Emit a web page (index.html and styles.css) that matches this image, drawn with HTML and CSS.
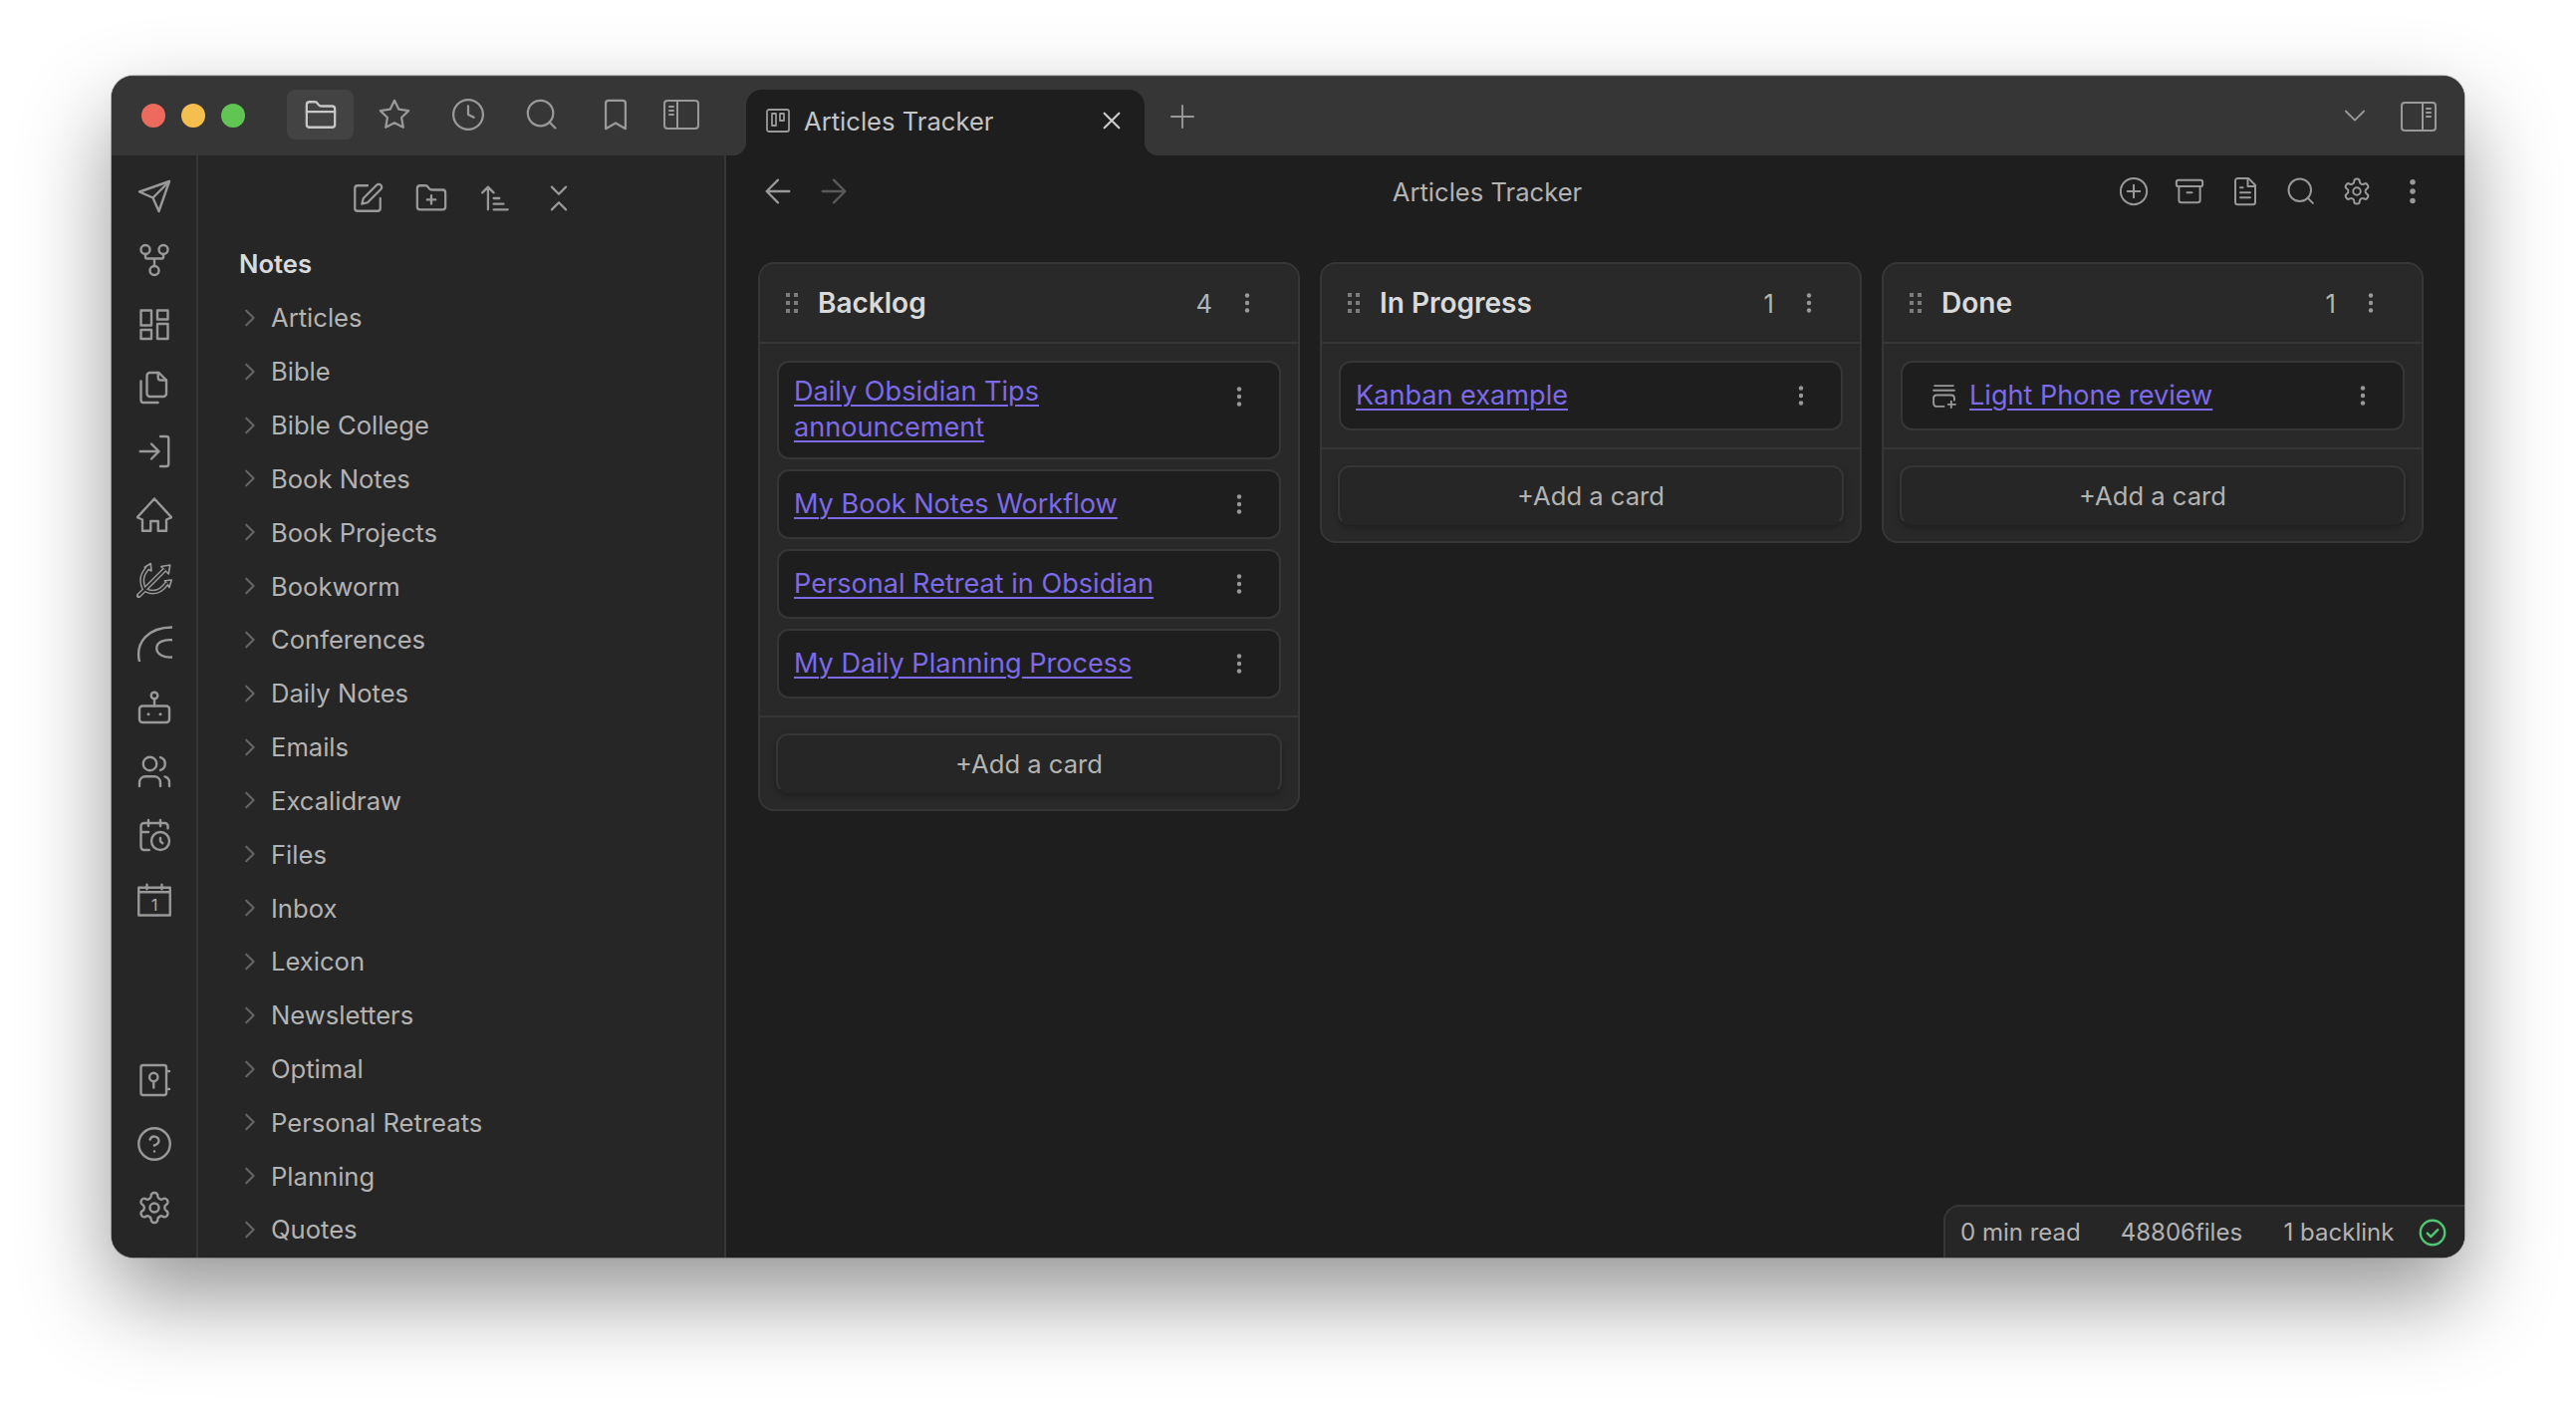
FILE: index.html
```html
<!DOCTYPE html>
<html>
<head>
    <title>Articles Tracker</title>
    <meta name="viewport" content="width=device-width, initial-scale=1">
    <link rel="stylesheet" href="styles.css">
</head>
<body>
<svg class="defs" width="0" height="0">
    <symbol id="i-chevron" viewBox="0 0 24 24"><path d="m9 4 8 8-8 8"/></symbol>
    <symbol id="i-kebab" viewBox="0 0 24 24"><circle class="solid" cx="12" cy="4.5" r="2.2"/><circle class="solid" cx="12" cy="12" r="2.2"/><circle class="solid" cx="12" cy="19.5" r="2.2"/></symbol>
    <symbol id="i-grip" viewBox="0 0 24 24"><rect class="solid" x="6" y="2" width="4" height="4"/><rect class="solid" x="14" y="2" width="4" height="4"/><rect class="solid" x="6" y="10" width="4" height="4"/><rect class="solid" x="14" y="10" width="4" height="4"/><rect class="solid" x="6" y="18" width="4" height="4"/><rect class="solid" x="14" y="18" width="4" height="4"/></symbol>
    <symbol id="i-search" viewBox="0 0 24 24"><circle cx="11" cy="11" r="9"/><path d="m21.5 21.5-4.2-4.2"/></symbol>
    <symbol id="i-gear" viewBox="0 0 24 24"><path d="M12.22 2h-.44a2 2 0 0 0-2 2v.18a2 2 0 0 1-1 1.73l-.43.25a2 2 0 0 1-2 0l-.15-.08a2 2 0 0 0-2.73.73l-.22.38a2 2 0 0 0 .73 2.73l.15.1a2 2 0 0 1 1 1.72v.51a2 2 0 0 1-1 1.74l-.15.09a2 2 0 0 0-.73 2.73l.22.38a2 2 0 0 0 2.73.73l.15-.08a2 2 0 0 1 2 0l.43.25a2 2 0 0 1 1 1.73V20a2 2 0 0 0 2 2h.44a2 2 0 0 0 2-2v-.18a2 2 0 0 1 1-1.73l.43-.25a2 2 0 0 1 2 0l.15.08a2 2 0 0 0 2.73-.73l.22-.39a2 2 0 0 0-.73-2.73l-.15-.08a2 2 0 0 1-1-1.74v-.5a2 2 0 0 1 1-1.74l.15-.09a2 2 0 0 0 .73-2.73l-.22-.38a2 2 0 0 0-2.73-.73l-.15.08a2 2 0 0 1-2 0l-.43-.25a2 2 0 0 1-1-1.73V4a2 2 0 0 0-2-2z"/><circle cx="12" cy="12" r="3"/></symbol>
</svg>

<div class="window">
    <div class="titlebar">
        <div class="lights">
            <span class="light red"></span>
            <span class="light yellow"></span>
            <span class="light green"></span>
        </div>
        <div class="title-tools">
            <span class="tool active"><svg class="icon lg" viewBox="0 0 24 24"><path d="M20 21a2 2 0 0 0 2-2V8a2 2 0 0 0-2-2h-7.9a2 2 0 0 1-1.69-.9L9.6 3.9A2 2 0 0 0 7.93 3H4a2 2 0 0 0-2 2v14a2 2 0 0 0 2 2Z"/><path d="M2 10h20"/></svg></span>
            <span class="tool"><svg class="icon lg" viewBox="0 0 24 24"><path d="M12 2l3.09 6.26L22 9.27l-5 4.87 1.18 6.88L12 17.77l-6.18 3.25L7 14.14 2 9.27l6.91-1.01z"/></svg></span>
            <span class="tool"><svg class="icon lg" viewBox="0 0 24 24"><circle cx="12" cy="12" r="10.5"/><path d="M12 6v6l4 2"/></svg></span>
            <span class="tool"><svg class="icon lg"><use href="#i-search"/></svg></span>
            <span class="tool"><svg class="icon lg" viewBox="0 0 24 24"><path d="m19 22-7-4-7 4V4a2 2 0 0 1 2-2h10a2 2 0 0 1 2 2z"/></svg></span>
            <span class="tool narrow"><svg class="icon wide" viewBox="0 0 36 30"><rect x="1" y="1" width="34" height="28" rx="3"/><path d="M14 1v28M6 7h4M6 11h4M6 15h4"/></svg></span>
        </div>
        <div class="tab">
            <svg class="icon tab-icon" viewBox="0 0 24 24"><rect x="1" y="1" width="22" height="22" rx="2"/><rect x="6" y="5" width="4" height="12"/><rect x="14" y="5" width="4" height="7"/></svg>
            <span class="tab-title">Articles Tracker</span>
            <svg class="icon tab-close" viewBox="0 0 24 24"><path d="M4 4l16 16M20 4 4 20"/></svg>
        </div>
        <svg class="icon new-tab" viewBox="0 0 24 24"><path d="M12 1v22M1 12h22"/></svg>
        <div class="title-right">
            <svg class="icon chev-down" viewBox="0 0 24 24"><path d="m2 6 10 10L22 6"/></svg>
            <svg class="icon wide" viewBox="0 0 36 30"><rect x="1" y="1" width="34" height="28" rx="3"/><path d="M22 1v28M26 7h4M26 11h4M26 15h4"/></svg>
        </div>
    </div>

    <div class="body">
        <div class="ribbon">
            <div class="ribbon-group">
                <svg class="icon rb" viewBox="0 0 24 24"><path d="m22 2-7 20-4-9-9-4Z"/><path d="M22 2 11 13"/></svg>
                <svg class="icon rb" viewBox="0 0 24 24"><circle cx="12" cy="19" r="3"/><circle cx="6" cy="5" r="3"/><circle cx="18" cy="5" r="3"/><path d="M18 8v2c0 .6-.4 1-1 1H7c-.6 0-1-.4-1-1V8M12 11v5"/></svg>
                <svg class="icon rb" viewBox="0 0 24 24"><rect x="3" y="3" width="7" height="10"/><rect x="14" y="3" width="7" height="6"/><rect x="14" y="12" width="7" height="10"/><rect x="3" y="16" width="7" height="6"/></svg>
                <svg class="icon rb" viewBox="0 0 24 24"><path d="M20 7h-4a1.5 1.5 0 0 1-1.5-1.5V2"/><path d="M9 18a2 2 0 0 1-2-2V4a2 2 0 0 1 2-2h6l5 5v9a2 2 0 0 1-2 2Z"/><path d="M3 7.6v12.8A1.6 1.6 0 0 0 4.6 22h9.8"/></svg>
                <svg class="icon rb" viewBox="0 0 24 24"><path d="M16 2h4a1.5 1.5 0 0 1 1.5 1.5v17A1.5 1.5 0 0 1 20 22h-4"/><path d="m10 17 5-5-5-5M15 12H2.5"/></svg>
                <svg class="icon rb" viewBox="0 0 24 24"><path d="M12 1 .5 13.5 4 15v7.5h5.5V16h5v6.5H20V15l3.5-1.5z"/></svg>
                <svg class="icon rb trident" viewBox="0 0 24 24">
                    <path class="tri-out" d="M1.5 22.5 19 5M5.5 18.5C2.5 13 3.5 8 8 3.500M5.500 18.500C11 21.500 16 20.500 20.500 14"/>
                    <path class="tri-head" d="M5.500 3.500 9.500 1l.5 5zM16.500 3l6-1-1 6zM19 12.500l4.500-.5-1.500 5z"/>
                    <path class="tri-in" d="M1.500 22.500 19 5M5.500 18.500C2.500 13 3.500 8 8 3.500M5.500 18.500C11 21.500 16 20.500 20.500 14"/>
                </svg>
                <svg class="icon rb" viewBox="0 0 24 24"><path d="M2 24C-1 11 8 1 24 1"/><path d="M24 9.500C18 9 13.500 11 13.500 15S18 21.500 24 21"/></svg>
                <svg class="icon rb" viewBox="0 0 24 24"><rect x="2" y="11" width="20" height="11" rx="2"/><circle cx="12" cy="4" r="2.2"/><path d="M12 6.200V11"/><circle class="solid" cx="8" cy="16.500" r="1"/><circle class="solid" cx="16" cy="16.500" r="1"/></svg>
                <svg class="icon rb" viewBox="0 0 24 24"><path d="M16 22v-2.500a4 4 0 0 0-4-4H6a4 4 0 0 0-4 4V22"/><circle cx="9" cy="7" r="4.500"/><path d="M22 22v-2.500a4 4 0 0 0-3-3.870M16 2.700a4.500 4.500 0 0 1 0 8.600"/></svg>
                <svg class="icon rb" viewBox="0 0 24 24"><path d="M21 7.500V6a2 2 0 0 0-2-2H5a2 2 0 0 0-2 2v14a2 2 0 0 0 2 2h3.500M16 2v4M8 2v4M3 10h5M17.500 17.500 16 16.250V14"/><circle cx="16" cy="16" r="6"/></svg>
                <svg class="icon rb" viewBox="0 0 24 24"><path d="M1.500 4.500h21V23h-21zM1.500 7.500h21M7 2.500v3M17 2.500v3"/><text class="cal-num" x="12" y="20">1</text></svg>
            </div>
            <div class="ribbon-group">
                <svg class="icon rb" viewBox="0 0 24 24"><rect x="3" y="2" width="17" height="20" rx="1.500"/><circle cx="11.500" cy="10" r="2.800"/><path d="M11.500 12.800V17M20 6h2M20 18h2"/></svg>
                <svg class="icon rb" viewBox="0 0 24 24"><circle cx="12" cy="12" r="10.5"/><path d="M9.090 9a3 3 0 0 1 5.830 1c0 2-3 3-3 3M12 17h.01"/></svg>
                <svg class="icon rb"><use href="#i-gear"/></svg>
            </div>
        </div>

        <div class="sidebar">
            <div class="side-tools">
                <svg class="icon md" viewBox="0 0 24 24"><path d="M12 3H5a2 2 0 0 0-2 2v14a2 2 0 0 0 2 2h14a2 2 0 0 0 2-2v-7"/><path d="M18.375 2.625a2.121 2.121 0 1 1 3 3L12 15l-4 1 1-4Z"/></svg>
                <svg class="icon md" viewBox="0 0 24 24"><path d="M4 20h16a2 2 0 0 0 2-2V8a2 2 0 0 0-2-2h-7.930a2 2 0 0 1-1.660-.9l-.82-1.200A2 2 0 0 0 7.930 3H4a2 2 0 0 0-2 2v13c0 1.100.9 2 2 2Z"/><path d="M12 10v6M9 13h6"/></svg>
                <svg class="icon md" viewBox="0 0 24 24"><path d="m3 8 4-4 4 4M7 4v16M11 12h4M11 16h7M11 20h10"/></svg>
                <svg class="icon md" viewBox="0 0 24 24"><path d="m7 20 5-5 5 5M7 4l5 5 5-5"/></svg>
            </div>
            <div class="vault-name">Notes</div>
            <div class="tree">
                <div class="tree-row"><svg class="icon chev"><use href="#i-chevron"/></svg>Articles</div>
                <div class="tree-row"><svg class="icon chev"><use href="#i-chevron"/></svg>Bible</div>
                <div class="tree-row"><svg class="icon chev"><use href="#i-chevron"/></svg>Bible College</div>
                <div class="tree-row"><svg class="icon chev"><use href="#i-chevron"/></svg>Book Notes</div>
                <div class="tree-row"><svg class="icon chev"><use href="#i-chevron"/></svg>Book Projects</div>
                <div class="tree-row"><svg class="icon chev"><use href="#i-chevron"/></svg>Bookworm</div>
                <div class="tree-row"><svg class="icon chev"><use href="#i-chevron"/></svg>Conferences</div>
                <div class="tree-row"><svg class="icon chev"><use href="#i-chevron"/></svg>Daily Notes</div>
                <div class="tree-row"><svg class="icon chev"><use href="#i-chevron"/></svg>Emails</div>
                <div class="tree-row"><svg class="icon chev"><use href="#i-chevron"/></svg>Excalidraw</div>
                <div class="tree-row"><svg class="icon chev"><use href="#i-chevron"/></svg>Files</div>
                <div class="tree-row"><svg class="icon chev"><use href="#i-chevron"/></svg>Inbox</div>
                <div class="tree-row"><svg class="icon chev"><use href="#i-chevron"/></svg>Lexicon</div>
                <div class="tree-row"><svg class="icon chev"><use href="#i-chevron"/></svg>Newsletters</div>
                <div class="tree-row"><svg class="icon chev"><use href="#i-chevron"/></svg>Optimal</div>
                <div class="tree-row"><svg class="icon chev"><use href="#i-chevron"/></svg>Personal Retreats</div>
                <div class="tree-row"><svg class="icon chev"><use href="#i-chevron"/></svg>Planning</div>
                <div class="tree-row"><svg class="icon chev"><use href="#i-chevron"/></svg>Quotes</div>
            </div>
        </div>

        <div class="main">
            <div class="nav">
                <div class="nav-arrows">
                    <svg class="icon md" viewBox="0 0 24 24"><path d="m12 20-8-8 8-8M20 12H4"/></svg>
                    <svg class="icon md dim" viewBox="0 0 24 24"><path d="m12 4 8 8-8 8M4 12h16"/></svg>
                </div>
                <div class="nav-title">Articles Tracker</div>
                <div class="nav-actions">
                    <svg class="icon nv" viewBox="0 0 24 24"><circle cx="12" cy="12" r="10.5"/><path d="M12 7v10M7 12h10"/></svg>
                    <svg class="icon nv" viewBox="0 0 24 24"><rect x="1.500" y="3" width="21" height="5" rx="1.500"/><path d="M3.500 8v11a2 2 0 0 0 2 2h13a2 2 0 0 0 2-2V8M10 13h4"/></svg>
                    <svg class="icon nv" viewBox="0 0 24 24"><path d="M14.500 1.500H6a2 2 0 0 0-2 2v17a2 2 0 0 0 2 2h12a2 2 0 0 0 2-2V7z"/><path d="M14 2v6h6M16 13H8M16 17H8M10 9H8"/></svg>
                    <svg class="icon nv"><use href="#i-search"/></svg>
                    <svg class="icon nv"><use href="#i-gear"/></svg>
                    <svg class="icon nv"><use href="#i-kebab"/></svg>
                </div>
            </div>

            <div class="board">
                <div class="column">
                    <div class="col-head">
                        <svg class="icon grip"><use href="#i-grip"/></svg>
                        <span class="col-name">Backlog</span>
                        <span class="col-count">4</span>
                        <svg class="icon kebab"><use href="#i-kebab"/></svg>
                    </div>
                    <div class="cards">
                        <div class="card"><a class="card-link">Daily Obsidian Tips announcement</a><svg class="icon kebab top"><use href="#i-kebab"/></svg></div>
                        <div class="card"><a class="card-link">My Book Notes Workflow</a><svg class="icon kebab"><use href="#i-kebab"/></svg></div>
                        <div class="card"><a class="card-link">Personal Retreat in Obsidian</a><svg class="icon kebab"><use href="#i-kebab"/></svg></div>
                        <div class="card"><a class="card-link">My Daily Planning Process</a><svg class="icon kebab"><use href="#i-kebab"/></svg></div>
                    </div>
                    <div class="col-foot"><div class="add-card">+Add a card</div></div>
                </div>

                <div class="column">
                    <div class="col-head">
                        <svg class="icon grip"><use href="#i-grip"/></svg>
                        <span class="col-name">In Progress</span>
                        <span class="col-count">1</span>
                        <svg class="icon kebab"><use href="#i-kebab"/></svg>
                    </div>
                    <div class="cards">
                        <div class="card"><a class="card-link">Kanban example</a><svg class="icon kebab"><use href="#i-kebab"/></svg></div>
                    </div>
                    <div class="col-foot"><div class="add-card">+Add a card</div></div>
                </div>

                <div class="column">
                    <div class="col-head">
                        <svg class="icon grip"><use href="#i-grip"/></svg>
                        <span class="col-name">Done</span>
                        <span class="col-count">1</span>
                        <svg class="icon kebab"><use href="#i-kebab"/></svg>
                    </div>
                    <div class="cards">
                        <div class="card">
                            <svg class="icon card-icon" viewBox="0 0 24 24"><path d="M3 2h18M2 6.500h20M12 22H5a3 3 0 0 1-3-3v-5a3 3 0 0 1 3-3h14a3 3 0 0 1 3 3v2M19 17v6M16 20h7"/></svg>
                            <a class="card-link">Light Phone review</a>
                            <svg class="icon kebab"><use href="#i-kebab"/></svg>
                        </div>
                    </div>
                    <div class="col-foot"><div class="add-card">+Add a card</div></div>
                </div>
            </div>

            <div class="status">
                <span>0 min read</span>
                <span>48806files</span>
                <span class="backlinks">1 backlink</span>
                <svg class="icon sync" viewBox="0 0 24 24"><circle cx="12" cy="12" r="10.5"/><path d="m7.500 12.500 3 3 6-6"/></svg>
            </div>
        </div>
    </div>
</div>
</body>
</html>
```

FILE: styles.css
```css
* {
    box-sizing: border-box;
}

html, body {
    margin: 0;
    height: 100%;
}

body {
    background-color: #ffffff;
    padding: 76px 0 0 112px;
    font-family: Inter, "Liberation Sans", sans-serif;
    font-size: 25.6px;
    color: #b3b3b3;
    overflow: hidden;
}

.defs {
    display: block;
}

.icon {
    display: block;
    flex: none;
    fill: none;
    stroke: #999999;
    stroke-width: 1.6;
    stroke-linecap: round;
    stroke-linejoin: round;
}

.icon .solid,
symbol .solid {
    fill: #999999;
    stroke: none;
}

.window {
    width: 2362px;
    height: 1186px;
    display: flex;
    flex-direction: column;
    border-radius: 22px;
    overflow: hidden;
    background-color: #1e1e1e;
    box-shadow: 0 0 0 1px rgba(0, 0, 0, .25), 0 40px 90px rgba(0, 0, 0, .42);
}

/* title bar */
.titlebar {
    flex: none;
    height: 80px;
    display: flex;
    align-items: flex-start;
    background-color: #363636;
    padding-left: 30px;
    border-top: 1px solid #4a4a4a;
}

.lights {
    display: flex;
    gap: 16px;
    margin-top: 27px;
    width: 146px;
}

.light {
    width: 24px;
    height: 24px;
    border-radius: 50%;
}

.red { background-color: #ec6a5e; }
.yellow { background-color: #f4bf4f; }
.green { background-color: #61c554; }

.title-tools {
    display: flex;
    gap: 7px;
    margin-top: 13px;
    width: 461px;
}

.tool {
    width: 67px;
    height: 50px;
    display: flex;
    align-items: center;
    justify-content: center;
    border-radius: 8px;
}

.tool.active {
    background-color: #434343;
}

.tool.active .icon {
    stroke: #c8c8c8;
}

.tool.narrow {
    margin-left: -8px;
}

.icon.lg {
    width: 34px;
    height: 34px;
}

.icon.wide {
    width: 36px;
    height: 30px;
    stroke-width: 2;
}

.tab {
    position: relative;
    width: 400px;
    height: 66px;
    margin-top: 13px;
    display: flex;
    align-items: center;
    padding: 0 20px 4px 20px;
    background-color: #1e1e1e;
    border-radius: 16px 16px 0 0;
}

.tab::before,
.tab::after {
    content: "";
    position: absolute;
    bottom: 0;
    width: 14px;
    height: 14px;
}

.tab::before {
    left: -14px;
    background: radial-gradient(circle at 0 0, #363636 14px, #1e1e1e 14.5px);
}

.tab::after {
    right: -14px;
    background: radial-gradient(circle at 100% 0, #363636 14px, #1e1e1e 14.5px);
}

.tab-icon {
    width: 24px;
    height: 24px;
    stroke-width: 1.8;
}

.tab-title {
    margin-left: 14px;
    color: #c4c4c4;
    flex: 1;
}

.tab-close {
    width: 22px;
    height: 22px;
    stroke: #cccccc;
    stroke-width: 2.4;
    margin-right: 2px;
}

.new-tab {
    width: 24px;
    height: 24px;
    margin: 28px 0 0 26px;
    stroke-width: 1.9;
}

.title-right {
    margin-left: auto;
    display: flex;
    align-items: center;
    gap: 35px;
    padding: 25px 28px 0 0;
}

.chev-down {
    width: 22px;
    height: 22px;
    stroke-width: 2;
}

/* ribbon */
.body {
    flex: 1;
    display: flex;
    min-height: 0;
}

.ribbon {
    flex: none;
    width: 87px;
    background-color: #262626;
    border-right: 2px solid #363636;
    display: flex;
    flex-direction: column;
    justify-content: space-between;
    align-items: center;
    padding: 23px 0 32px;
}

.ribbon-group {
    display: flex;
    flex-direction: column;
    gap: 28.1px;
}

.icon.rb {
    width: 36px;
    height: 36px;
}

.trident .tri-out {
    stroke-width: 3.2;
}

.trident .tri-head {
    fill: #262626;
    stroke-width: 1.1;
}

.trident .tri-in {
    stroke: #262626;
    stroke-width: 1.2;
    stroke-linecap: butt;
}

.cal-num {
    font-family: Inter, "Liberation Sans", sans-serif;
    font-size: 11px;
    text-anchor: middle;
    fill: #aaaaaa;
    stroke: none;
}

/* file tree */
.sidebar {
    flex: none;
    width: 530px;
    background-color: #262626;
    border-right: 2px solid #363636;
    overflow: hidden;
}

.side-tools {
    display: flex;
    justify-content: center;
    gap: 30px;
    padding: 26px 0 0 3px;
}

.icon.md {
    width: 34px;
    height: 34px;
}

.vault-name {
    color: #dadada;
    font-weight: 600;
    padding: 31px 0 0 41px;
    line-height: 36px;
}

.tree {
    margin-top: 9px;
}

.tree-row {
    height: 53.84px;
    display: flex;
    align-items: center;
    padding-left: 40px;
    white-space: nowrap;
}

.icon.chev {
    width: 22px;
    height: 22px;
    margin-right: 11px;
    stroke: #666666;
    stroke-width: 2.2;
}

/* main area */
.main {
    position: relative;
    flex: 1;
    min-width: 0;
    background-color: #1e1e1e;
}

.nav {
    height: 72px;
    display: flex;
    align-items: center;
    padding: 0 37.5px 0 35px;
    position: relative;
}

.nav-arrows {
    display: flex;
    gap: 22px;
}

.icon.dim {
    stroke: #5a5a5a;
}

.nav-title {
    position: absolute;
    left: 0;
    width: 1528px;
    text-align: center;
    color: #b3b3b3;
}

.nav-actions {
    margin-left: auto;
    display: flex;
    gap: 26px;
}

.icon.nv {
    width: 30px;
    height: 30px;
}

.board {
    display: flex;
    align-items: flex-start;
    gap: 20px;
    padding: 35px 0 0 32px;
}

.column {
    width: 544px;
    background-color: #292929;
    border: 2px solid #363636;
    border-radius: 16px;
}

.col-head {
    height: 80px;
    display: flex;
    align-items: center;
    padding: 0 39px 0 20px;
    border-bottom: 2px solid #363636;
}

.icon.grip {
    width: 24px;
    height: 24px;
    stroke: none;
    opacity: .75;
}

.col-name {
    flex: 1;
    margin-left: 14px;
    font-size: 28px;
    font-weight: 600;
    color: #dadada;
}

.col-count {
    color: #b3b3b3;
    margin-right: 23px;
}

.icon.kebab {
    width: 24px;
    height: 24px;
    stroke: none;
}

.icon.kebab.top {
    align-self: flex-start;
    margin-top: 22px;
}

.cards {
    display: flex;
    flex-direction: column;
    gap: 10px;
    padding: 17px;
}

.card {
    min-height: 70px;
    display: flex;
    align-items: center;
    padding: 0 28.5px 0 15px;
    background-color: #1e1e1e;
    border: 2px solid #363636;
    border-radius: 12px;
}

.card-link {
    flex: 1;
    color: #7d6ae8;
    font-size: 27.1px;
    line-height: 36px;
    text-decoration: underline;
    text-decoration-thickness: 2px;
    text-underline-offset: 4px;
    padding: 11px 20px 12px 0;
}

.icon.card-icon {
    width: 25px;
    height: 25px;
    margin: 0 13px 0 14px;
    stroke-width: 1.8;
}

.col-foot {
    padding: 16px;
    border-top: 2px solid #363636;
}

.add-card {
    height: 60px;
    display: flex;
    align-items: center;
    justify-content: center;
    background-color: #262626;
    border: 2px solid #363636;
    border-bottom-color: #262626;
    border-radius: 12px;
    color: #b3b3b3;
    box-shadow: 0 3px 6px rgba(0, 0, 0, .25);
}

/* status bar */
.status {
    position: absolute;
    right: 0;
    bottom: 0;
    width: 523px;
    height: 53px;
    display: flex;
    align-items: center;
    padding-left: 15px;
    background-color: #262626;
    border: 2px solid #363636;
    border-right: 0;
    border-bottom: 0;
    border-top-left-radius: 16px;
    font-size: 24px;
    gap: 40px;
}

.backlinks {
    margin-left: 1.5px;
}

.icon.sync {
    width: 28px;
    height: 28px;
    margin-left: -15px;
    stroke: #4fc873;
    stroke-width: 2;
}
```
